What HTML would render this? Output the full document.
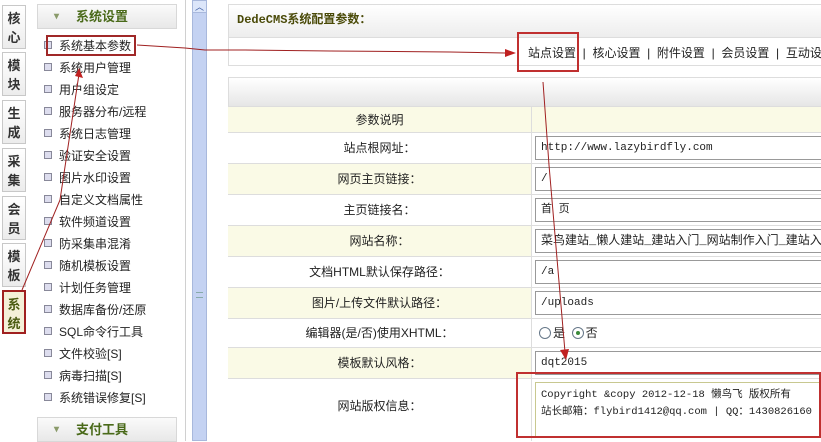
<!DOCTYPE html>
<html><head><meta charset="utf-8"><style>
*{margin:0;padding:0;box-sizing:border-box}
body{width:821px;height:441px;overflow:hidden;background:#fff;position:relative;font-family:"Liberation Sans","Noto Sans CJK SC","WenQuanYi Zen Hei",sans-serif;font-size:12px;color:#222}
.abs{position:absolute}
.tab{position:absolute;left:2px;width:24px;height:44px;border:1px solid #c8c8c8;background:linear-gradient(#fff,#ececec);font-weight:bold;font-size:13px;line-height:19px;text-align:center;color:#333;padding-top:3px}
.side{left:28px;top:0;width:158px;height:441px;border-right:1px solid #d0d0d0}
.hd{position:absolute;left:37px;width:140px;height:25px;border:1px solid #d8d8d8;background:linear-gradient(#fafafa,#e8e8e8);color:#4a6a1a;font-weight:bold;font-size:13px;line-height:23px;padding-left:38px}
.hd:before{content:"▾";position:absolute;left:16px;color:#8a9a6a;font-size:10px}
.it{position:absolute;left:44px;font-size:12px;line-height:16px;color:#222}
.it:before{content:"";display:inline-block;width:6px;height:6px;border:1px solid #889;background:#dde;margin-right:7px;vertical-align:1px}
.row{position:absolute;left:228px;width:593px;border-top:1px solid #ddd}
.lab{position:absolute;left:0;width:303px;height:100%;text-align:center;font-size:12px}
.val{position:absolute;left:303px;right:0;height:100%;background:#fff;border-left:1px solid #ddd}
.inp{position:absolute;left:3px;right:0;top:3px;height:24px;border:1px solid #999;border-right:none;font-family:"Liberation Mono","Noto Sans CJK SC",monospace;font-size:11px;line-height:22px;padding-left:5px}
.rad{display:inline-block;width:12px;height:12px;border:1px solid #678;border-radius:50%;vertical-align:-2px;margin-right:2px;background:#fff;position:relative}
</style></head><body>
<div class="tab" style="top:5px">核<br>心</div>
<div class="tab" style="top:52px">模<br>块</div>
<div class="tab" style="top:100px">生<br>成</div>
<div class="tab" style="top:148px">采<br>集</div>
<div class="tab" style="top:196px">会<br>员</div>
<div class="tab" style="top:243px">模<br>板</div>
<div class="tab" style="top:290px;background:#f4f0d8;color:#4a5a10;border:2px solid #a02020">系<br>统</div>
<div class="abs side"></div>
<div class="hd" style="top:4px">系统设置</div>
<div class="it" style="top:38px">系统基本参数</div>
<div class="abs" style="left:46px;top:35px;width:90px;height:21px;border:2px solid #a02828"></div>
<div class="it" style="top:60px">系统用户管理</div>
<div class="it" style="top:82px">用户组设定</div>
<div class="it" style="top:104px">服务器分布/远程</div>
<div class="it" style="top:126px">系统日志管理</div>
<div class="it" style="top:148px">验证安全设置</div>
<div class="it" style="top:170px">图片水印设置</div>
<div class="it" style="top:192px">自定义文档属性</div>
<div class="it" style="top:214px">软件频道设置</div>
<div class="it" style="top:236px">防采集串混淆</div>
<div class="it" style="top:258px">随机模板设置</div>
<div class="it" style="top:280px">计划任务管理</div>
<div class="it" style="top:302px">数据库备份/还原</div>
<div class="it" style="top:324px">SQL命令行工具</div>
<div class="it" style="top:346px">文件校验[S]</div>
<div class="it" style="top:368px">病毒扫描[S]</div>
<div class="it" style="top:390px">系统错误修复[S]</div>
<div class="hd" style="top:417px">支付工具</div>
<div class="abs" style="left:192px;top:0;width:15px;height:441px;background:#c4d2f2;border:1px solid #a8b8dc"></div>
<div class="abs" style="left:192px;top:0;width:15px;height:13px;background:#dce6fa;border:1px solid #a8b8dc;color:#3a5aa0;font-size:9px;text-align:center;line-height:12px">︿</div>
<div class="abs" style="left:196px;top:292px;width:7px;height:6px;border-top:1px solid #8aa;border-bottom:1px solid #8aa"></div>
<div class="abs" style="left:228px;top:4px;width:593px;height:62px;border:1px solid #ddd;border-right:none"></div>
<div class="abs" style="left:229px;top:5px;width:592px;height:32px;background:linear-gradient(#fff,#ededed);color:#4a4a08;font-weight:bold;font-family:'Liberation Mono','Noto Sans CJK SC',monospace;font-size:12px;line-height:30px;padding-left:8px">DedeCMS系统配置参数：</div>
<div class="abs" style="left:229px;top:37px;width:592px;height:1px;background:#ddd"></div>
<div class="abs" style="left:528px;top:44px;font-size:12px;white-space:nowrap;color:#222">站点设置 &nbsp;|&nbsp; 核心设置 &nbsp;|&nbsp; 附件设置 &nbsp;|&nbsp; 会员设置 &nbsp;|&nbsp; 互动设置</div>
<div class="abs" style="left:517px;top:32px;width:62px;height:40px;border:2px solid #c03030"></div>
<div class="abs" style="left:228px;top:77px;width:593px;height:364px;border:1px solid #ddd;border-right:none"></div>
<div class="abs" style="left:229px;top:78px;width:592px;height:28px;background:linear-gradient(#fff,#e6e6e6)"></div>
<div class="row" style="top:106px;height:26px;background:#fafae6"><div class="lab" style="line-height:26px">参数说明</div><div class="val" style="background:#fafae6"></div></div>
<div class="row" style="top:132px;height:31px;background:#fff"><div class="lab" style="line-height:31px">站点根网址：</div><div class="val"><div class="inp">http://www.lazybirdfly.com</div></div></div>
<div class="row" style="top:163px;height:31px;background:#fafae6"><div class="lab" style="line-height:31px">网页主页链接：</div><div class="val"><div class="inp">/</div></div></div>
<div class="row" style="top:194px;height:31px;background:#fff"><div class="lab" style="line-height:31px">主页链接名：</div><div class="val"><div class="inp">首 页</div></div></div>
<div class="row" style="top:225px;height:31px;background:#fafae6"><div class="lab" style="line-height:31px">网站名称：</div><div class="val"><div class="inp" style="font-size:12px;white-space:nowrap;overflow:hidden">菜鸟建站_懒人建站_建站入门_网站制作入门_建站入门</div></div></div>
<div class="row" style="top:256px;height:31px;background:#fff"><div class="lab" style="line-height:31px">文档HTML默认保存路径：</div><div class="val"><div class="inp">/a</div></div></div>
<div class="row" style="top:287px;height:31px;background:#fafae6"><div class="lab" style="line-height:31px">图片/上传文件默认路径：</div><div class="val"><div class="inp">/uploads</div></div></div>
<div class="row" style="top:318px;height:29px;background:#fff"><div class="lab" style="line-height:29px">编辑器(是/否)使用XHTML：</div><div class="val" style="line-height:29px;padding-left:7px"><span class="rad"></span>是 &nbsp;<span class="rad"><span style="position:absolute;left:3px;top:3px;width:4px;height:4px;border-radius:50%;background:#3a8a3a"></span></span>否</div></div>
<div class="row" style="top:347px;height:31px;background:#fafae6"><div class="lab" style="line-height:31px">模板默认风格：</div><div class="val"><div class="inp">dqt2015</div></div></div>
<div class="row" style="top:378px;height:63px;background:#fff"><div class="lab" style="line-height:55px">网站版权信息：</div><div class="val"><div class="inp" style="height:56px;border-color:#c8c890;font-size:10.5px;line-height:17px;padding-top:4px;white-space:nowrap">Copyright &amp;copy 2012-12-18 懒鸟飞 版权所有<br>站长邮箱：flybird1412@qq.com | QQ：1430826160</div></div></div>
<div class="abs" style="left:516px;top:372px;width:305px;height:66px;border:2px solid #c03030"></div>
<svg class="abs" style="left:0;top:0" width="821" height="441">
<g stroke="#a02020" stroke-width="1" fill="none">
<path d="M137 45 L185 48 L205 50 L245 50 L330 51 L450 52 L505 53"/>
<path d="M22 290 L60 200 L79 74"/>
<path d="M543 82 L549 165 L565 352"/>
</g>
<path d="M505 49 L516 53 L505 57Z" fill="#c02020"/>
<path d="M75 76 L79 68 L83 78Z" fill="#c02020"/>
<path d="M560 350 L566 360 L569 349Z" fill="#c02020"/>
</svg>
</body></html>
